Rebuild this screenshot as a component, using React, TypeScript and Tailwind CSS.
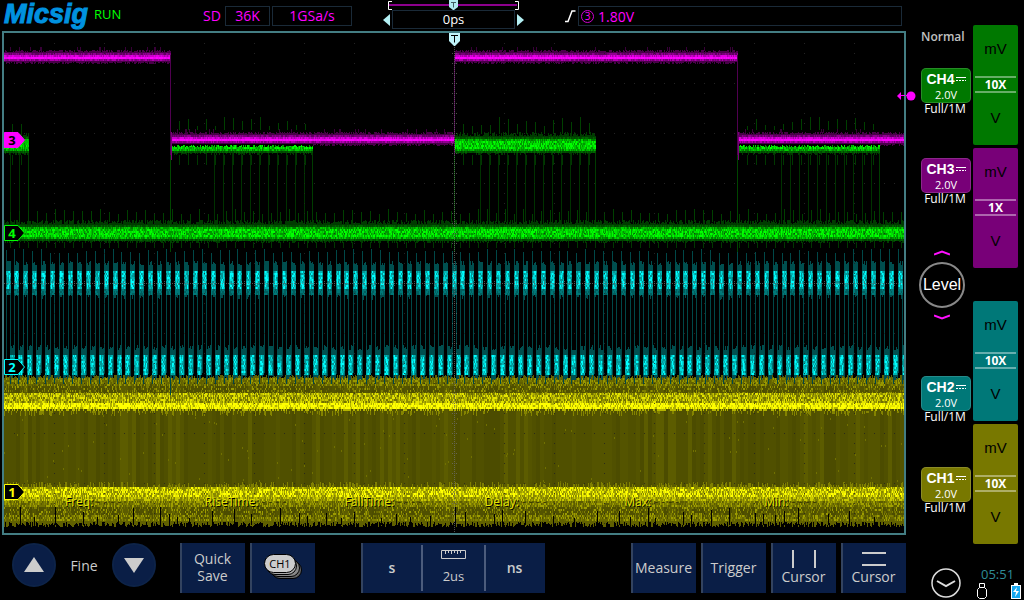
import clsx from "clsx";

type Cells = Record<string, string>;

// Small seeded generator so the traces look the same on every render
const createRandom = (seed: number) => {
  let s = seed;
  return () => {
    s = (s * 1664525 + 1013904223) % 4294967296;
    return s / 4294967296;
  };
};

const cell = (out: Cells, color: string, x: number, y: number, h: number, w = 1) => {
  out[color] = (out[color] || "") + `M${x} ${y}h${w}v${h}h-${w}z`;
};

const pick = (rand: () => number, colors: string[]) => colors[Math.floor(rand() * colors.length)];

// Channel 1: wide yellow band with two bright rails
const buildCh1 = () => {
  const rand = createRandom(11);
  const out: Cells = {};
  for (let x = 4; x < 904; x += 4) {
    cell(out, pick(rand, ["#4c4c00", "#505000", "#505000", "#545400", "#5c5c00"]), x, 380, 140, 4);
  }
  for (let x = 4; x < 904; x++) {
    cell(out, "#606000", x, 375 + Math.floor(rand() * 4), 8);
    for (let y = 378; y < 394; y += 2) {
      if (rand() < (y < 385 ? 0.7 : 0.3)) cell(out, pick(rand, ["#7c7c00", "#989800", "#686800"]), x, y, 2);
    }
    for (let y = 393; y < 403; y += 2) {
      cell(out, pick(rand, ["#707000", "#8c8c00", "#a8a800", "#c4c400", "#e4e400"]), x, y, 2);
    }
    for (let y = 403; y < 409; y += 2) {
      cell(out, pick(rand, ["#ffff00", "#e8e800", "#ffff00", "#b0b000"]), x, y, 2);
    }
    if (rand() < 0.5) cell(out, "#b4b400", x, 409, 2);
    if (rand() < 0.3) cell(out, "#848400", x, 411, 2 + Math.floor(rand() * 4));
    if (rand() < 0.12) cell(out, "#707000", x, 414 + Math.floor(rand() * 68), 2);
    if (rand() < 0.35) cell(out, "#808000", x, 482 + Math.floor(rand() * 4), 5);
    for (let y = 487; y < 497; y += 2) {
      cell(out, pick(rand, ["#ffff00", "#e8e800", "#c0c000", "#a0a000", "#888800"]), x, y, 2);
    }
    for (let y = 497; y < 507; y += 2) {
      cell(out, pick(rand, y < 501 ? ["#c8c800", "#a0a000", "#808000"] : ["#a0a000", "#808000", "#707000", "#5c5c00"]), x, y, 2);
    }
    for (let y = 507; y < 521; y += 2) {
      if (rand() < (y > 514 ? 0.7 : 0.35)) cell(out, pick(rand, ["#7c7c00", "#9c9c00", "#686800"]), x, y, 2);
    }
    cell(out, "#606000", x, 519, 3 + Math.floor(rand() * 6));
  }
  let x = 20;
  while (x < 900) {
    const h = 7 + Math.floor(rand() * 12);
    cell(out, "#000000", x, 525 - h, h);
    x += 7 + Math.floor(rand() * 24);
  }
  return out;
};

// Channel 2: cyan clock, high and low rails alternate every half period
const buildCh2 = () => {
  const rand = createRandom(22);
  const out: Cells = {};
  for (let i = 0; i < 102; i++) {
    const left = Math.round(5.5 + i * 8.92);
    if (left > 899) break;
    cell(out, "#004848", left, 249 + Math.floor(rand() * 5), 124);
    cell(out, "#004848", left + 4, 268, 116);
    for (let dx = 0; dx < 5; dx++) {
      const hi = left + dx;
      const lo = Math.min(left + 4 + dx, 903);
      const edge = dx === 0 || dx === 4;
      const colors = edge ? ["#00b4b4", "#009090", "#007474"] : ["#00ffff", "#00dcdc", "#00b4b4", "#009898"];
      cell(out, "#004f4f", hi, 261 + Math.floor(rand() * 5), 30 + Math.floor(rand() * 6));
      cell(out, "#004f4f", lo, 345 + Math.floor(rand() * 6), 30);
      for (let y = 271; y < 289; y += 2) cell(out, pick(rand, colors), hi, y, 2);
      for (let y = 289; y < 294; y += 2) cell(out, pick(rand, ["#007878", "#005f5f"]), hi, y, 2);
      for (let y = 355; y < 375; y += 2) cell(out, pick(rand, colors), lo, y, 2);
    }
  }
  cell(out, "#004848", 170, 370, 25);
  return out;
};

const ch4Bursts = [
  { from: 4, to: 29, edges: 10, covered: false },
  { from: 171, to: 313, edges: 214, covered: true },
  { from: 455, to: 596, edges: 480, covered: false },
  { from: 739, to: 880, edges: 781, covered: true },
];

// Channel 4: green low rail plus data bursts
const buildCh4 = () => {
  const rand = createRandom(44);
  const out: Cells = {};
  const rail = (x: number, mid: number) => {
    const top = mid - 8 - Math.floor(rand() * 5);
    cell(out, "#003c00", x, top, mid + 7 + Math.floor(rand() * 5) - top);
    for (let y = mid - 7; y < mid + 8; y += 2) {
      if (y < mid - 5 || y > mid + 5) {
        cell(out, pick(rand, ["#006400", "#005000", "#004600"]), x, y, 2);
      } else if (y < mid - 3 || y > mid + 3) {
        cell(out, pick(rand, ["#00d000", "#00b000", "#009000", "#007800"]), x, y, 2);
      } else {
        cell(out, pick(rand, ["#00ff00", "#00e000", "#00c000", "#009600"]), x, y, 2);
      }
    }
  };
  ch4Bursts.forEach(({ from, to, edges }) => {
    for (let x = edges; x < to; x += 9) cell(out, "#003200", x, 140, 85);
    cell(out, "#003c00", to - 1, 140, 85);
    for (let x = from + 8; x < to; x += 9) {
      const h = 8 + Math.floor(rand() * 10);
      cell(out, "#004000", x, 134 - h, h);
      cell(out, "#003800", x, 155, 10);
    }
    for (let x = from; x < to; x++) rail(x, 144);
  });
  [170, 454, 737].forEach((x) => cell(out, "#004600", x, 150, 102));
  for (let x = 10; x < 904; x += 9) {
    const h = 8 + Math.floor(rand() * 6);
    cell(out, "#004000", x, 222 - h, h);
    cell(out, "#003800", x, 242, 6);
  }
  for (let x = 4; x < 904; x++) rail(x, 232);
  // the magenta trace hides the upper half of these bursts
  ch4Bursts.filter((b) => b.covered).forEach(({ from, to }) => {
    for (let x = from; x < to; x++) cell(out, "#000000", x, 130, 15 + Math.floor(rand() * 3));
  });
  return out;
};

// Channel 3: magenta square wave
const buildCh3 = () => {
  const rand = createRandom(33);
  const out: Cells = {};
  for (let x = 4; x < 904; x++) {
    const high = x < 171 || (x >= 455 && x < 738);
    const mid = high ? 57 : 139;
    const covered = ch4Bursts.some((b) => b.covered && x >= b.from && x < b.to);
    const top = mid - 5 - Math.floor(rand() * 3);
    cell(out, "#4a004a", x, top, mid + (covered ? 5 : 5 + Math.floor(rand() * 3)) - top);
    if (rand() < 0.06) cell(out, "#380038", x, mid - 10, 4);
    cell(out, pick(rand, ["#780078", "#600060", "#900090"]), x, mid - 4, 2);
    cell(out, pick(rand, ["#c800c8", "#e000e0", "#a800a8"]), x, mid - 2, 2);
    cell(out, pick(rand, ["#ff00ff", "#ff00ff", "#f000f0"]), x, mid, 2);
    cell(out, pick(rand, ["#900090", "#b000b0", "#780078"]), x, mid + 2, 2);
  }
  [170, 454, 737].forEach((x) => cell(out, "#500050", x, 55, 100));
  [171, 738].forEach((x) => cell(out, "#780078", x, 132, 28));
  return out;
};

const buildGrid = () => {
  let dots = "";
  for (let x = 54; x < 904; x += 50) for (let y = 43; y < 533; y += 10) dots += `M${x} ${y}h1v1h-1z`;
  for (let y = 83; y < 533; y += 50) for (let x = 14; x < 904; x += 10) dots += `M${x} ${y}h1v1h-1z`;
  return dots;
};

const buildAxes = () => {
  let dots = "";
  for (let x = 4; x < 904; x += 2) dots += `M${x} 283h1v1h-1z`;
  for (let y = 45; y < 533; y += 2) dots += `M454 ${y}h1v1h-1z`;
  for (let x = 14; x < 904; x += 10) dots += `M${x} 281h1v1h-1zM${x} 285h1v1h-1z`;
  for (let y = 53; y < 533; y += 10) dots += `M452 ${y}h1v1h-1zM456 ${y}h1v1h-1z`;
  return dots;
};

const traces = [buildCh1(), buildCh2(), buildCh4(), buildCh3()];
const gridDots = buildGrid();
const axisDots = buildAxes();

const markers = [
  { label: "3", y: 140, color: "#ff00ff", filled: true },
  { label: "4", y: 233, color: "#00ff00", filled: false },
  { label: "2", y: 367, color: "#00ffff", filled: false },
  { label: "1", y: 492, color: "#ffff00", filled: false },
];

const measurements = ["Freq:", "RiseTime:", "FallTime:", "Delay:", "Max:", "Min:"];

const Scope = () => (
  <main className="relative ml-[2px] border-2 border-[#437d83]">
    <svg viewBox="4 33 900 500" className="block h-auto w-full" role="img" aria-label="Waveforms">
      <g shapeRendering="crispEdges">
        <path d={gridDots} fill="#303030" />
        {traces.map((trace, i) => (
          <g key={i}>
            {Object.entries(trace).map(([color, d]) => (
              <path key={color} d={d} fill={color} />
            ))}
          </g>
        ))}
        <path d={gridDots} fill="#202020" fillOpacity="0.8" />
        <path d={axisDots} fill="#707070" fillOpacity="0.7" />
      </g>
      <path d="M449 33h11v8l-5 5h-1l-5-5z" fill="#c0f4fa" />
      <path d="M451 35.5h7M454.5 35.5v7" stroke="#000" fill="none" />
      {markers.map((m) => (
        <g key={m.label}>
          <path
            d={`M4.5 ${m.y - 7.5}H18l6.500 7.500L18 ${m.y + 7.5}H4.500z`}
            fill={m.filled ? m.color : "#000"}
            stroke={m.color}
          />
          <text
            x="12"
            y={m.y + 5}
            textAnchor="middle"
            fill={m.filled ? "#000" : m.color}
            fontSize="13"
            fontWeight="bold"
            fontFamily="Open Sans, sans-serif"
          >
            {m.label}
          </text>
        </g>
      ))}
    </svg>
    <div className="absolute inset-x-0 bottom-[23px] grid grid-cols-6 pl-[61px] text-[12px] leading-4 text-[#e4e400] [text-shadow:1px_1px_0_#000]">
      {measurements.map((name) => (
        <div key={name}>
          {name}
          <span className="text-[#3c3c00] [text-shadow:none]"> - - - -</span>
        </div>
      ))}
    </div>
  </main>
);

const Header = () => (
  <header className="flex h-[31px] items-start">
    <div className="w-[94px] pl-[4px] font-['Liberation_Sans',sans-serif] text-[27px] leading-[28px] font-bold text-[#0092e0] italic [-webkit-text-stroke:1px_#0092e0]">
      Micsig
    </div>
    <div className="mt-[5px] w-[109px] text-[13px] leading-[18px] text-[#00ff00]">RUN</div>
    <div className="mt-[7px] w-[22px] text-[14px] leading-[18px] text-[#ff00ff]">SD</div>
    <div className="mt-[6px] h-[20px] w-[45px] border border-[#1a2a38] text-center text-[14px] leading-[17px] text-[#ff00ff]">36K</div>
    <div className="mt-[6px] ml-[2px] h-[20px] w-[80px] border border-[#1a2a38] text-center text-[14px] leading-[17px] text-[#ff00ff]">1GSa/s</div>
    <div className="ml-[30px] w-[142px]">
      <svg viewBox="0 0 142 10" className="block h-[10px] w-full" fill="none">
        <path d="M7 5h128" stroke="#8c008c" strokeWidth="2" />
        <path d="M10 1.500H6.500v8H10M133 1.500h3.500v8H133" stroke="#fff" />
        <path d="M67 0h9v7l-4 3h-1l-4-3z" fill="#b0e8ee" />
        <path d="M69 2.500h5M71.500 2.500v5" stroke="#405c60" />
      </svg>
      <div className="flex items-center justify-between">
        <button aria-label="Move left" className="ml-px">
          <svg viewBox="0 0 7 12" className="h-[12px] w-[7px]"><path d="M7 0v12L0 6z" fill="#b4f0f4" /></svg>
        </button>
        <div className="h-[19px] w-[123px] border border-[#1a2a38] text-center text-[13px] leading-[16px] text-white">0ps</div>
        <button aria-label="Move right">
          <svg viewBox="0 0 7 12" className="h-[12px] w-[7px]"><path d="M0 0v12l7-6z" fill="#b4f0f4" /></svg>
        </button>
      </div>
    </div>
    <svg viewBox="0 0 12 14" className="mt-[9px] ml-[40px] h-[14px] w-[12px]" fill="none">
      <path d="M1 12.500h3L8 2h3.500" stroke="#fff" strokeWidth="1.500" />
    </svg>
    <div className="mt-[6px] mr-[4px] ml-[2px] flex h-[20px] flex-1 items-center gap-[4px] border border-[#1a2a38] pl-[2px] text-[14px] leading-[17px] text-[#ff00ff]">
      <span className="flex size-[13px] items-center justify-center rounded-full border border-[#d000d0] text-[10px] leading-none">3</span>
      1.80V
    </div>
  </header>
);

const panelButton =
  "flex h-[50px] w-[65px] flex-col items-center justify-center border-l-2 border-[#33435f] bg-[#0a1e46] pr-[2px] pb-[2px] text-[14px] leading-[17px] font-medium text-[#cccccc]";
const roundButton =
  "flex size-[44px] items-center justify-center rounded-full border-2 border-[#0d2348] bg-[#0a1e46]";

const Footer = () => (
  <footer className="flex items-start pt-[8px] pl-[12px]">
    <button aria-label="Fine up" className={roundButton}>
      <svg viewBox="0 0 20 16" className="h-[16px] w-[20px]"><path d="M10 0l10 15H0z" fill="#ccc" /></svg>
    </button>
    <span className="w-[56px] pt-[13px] text-center text-[14px] leading-[20px] font-medium text-[#cccccc]">Fine</span>
    <button aria-label="Fine down" className={roundButton}>
      <svg viewBox="0 0 20 16" className="h-[16px] w-[20px]"><path d="M0 1h20L10 16z" fill="#ccc" /></svg>
    </button>
    <button className={clsx(panelButton, "ml-[24px]")}>
      Quick
      <br />
      Save
    </button>
    <button className={clsx(panelButton, "ml-[5px]")} aria-label="Channel CH1">
      <svg viewBox="0 0 40 27" className="h-[27px] w-[40px]">
        <g stroke="#000">
          <rect x="8.500" y="7.500" width="30" height="17" rx="8.500" fill="#666" />
          <rect x="6.500" y="5.500" width="30" height="17" rx="8.500" fill="#888" />
          <rect x="3.500" y="3.500" width="30" height="17" rx="8.500" fill="#aaa" />
          <rect x="1.500" y="0.500" width="31" height="18" rx="9" fill="#ccc" />
        </g>
        <text x="17" y="13.500" textAnchor="middle" fontSize="11" fill="#000">CH1</text>
      </svg>
    </button>
    <div className="ml-[46px] flex h-[50px] w-[184px] border-l-2 border-[#33435f] bg-[#0a1e46] text-[14px] text-[#cccccc]">
      <button className="w-[58px] pb-[2px] font-semibold">s</button>
      <div className="my-[2px] flex w-[65px] flex-col items-center border-x-2 border-[#4c5c7c]">
        <svg viewBox="0 0 25 9" className="mt-[5px] h-[9px] w-[25px]" fill="none" stroke="#ccc">
          <path d="M.5.5h24v8H.5zM4.500 1v3M7.500 1v2M10.500 1v3M13.500 1v2M16.500 1v3M19.500 1v2" />
        </svg>
        <span className="mt-[8px] text-[13px] leading-[18px]">2us</span>
      </div>
      <button className="flex-1 pr-[2px] pb-[2px] font-semibold">ns</button>
    </div>
    <div className="ml-auto flex gap-[5px]">
      <button className={panelButton}>Measure</button>
      <button className={panelButton}>Trigger</button>
      <button className={panelButton}>
        <svg viewBox="0 0 24 18" className="h-[18px] w-[24px]" stroke="#ccc" strokeWidth="2"><path d="M1 0v18M23 0v18" /></svg>
        Cursor
      </button>
      <button className={panelButton}>
        <svg viewBox="0 0 24 18" className="h-[18px] w-[24px]" stroke="#ccc" strokeWidth="2"><path d="M0 3h24M0 15h24" /></svg>
        Cursor
      </button>
    </div>
  </footer>
);

const ChannelBadge = ({ name, className, color }: { name: string; className: string; color: string }) => (
  <div className={className}>
    <button className={clsx("flex h-[35px] w-[50px] flex-col items-center justify-end rounded-[5px] border border-white/15 text-white", color)}>
      <span className="flex items-center gap-px font-['Liberation_Sans',sans-serif] text-[14px] leading-[16px] font-bold">
        {name}
        <svg viewBox="0 0 10 4" className="h-[4px] w-[10px]" fill="none" stroke="#fff">
          <path d="M0 .5h10" />
          <path d="M0 3.500h10" strokeDasharray="2 1" />
        </svg>
      </span>
      <span className="text-[11px] leading-[15px]">2.0V</span>
    </button>
    <div className="w-[48px] text-center text-[12px] leading-[12px] whitespace-nowrap text-white">Full/1M</div>
  </div>
);

const VoltControl = ({ name, probe, color, className }: { name: string; probe: string; color: string; className?: string }) => (
  <div className={clsx("flex h-[120px] w-[45px] flex-col rounded-[2px] px-[2px] font-['Liberation_Sans',sans-serif] text-[15px] text-black", color, className)}>
    <button aria-label={`${name} mV`} className="h-[51px] pb-[2px]">mV</button>
    <div className="border-y-2 border-white/40 text-center font-['Open_Sans',sans-serif] text-[12px] leading-[13px] font-bold text-white">{probe}</div>
    <button aria-label={`${name} V`} className="flex-1 pb-[2px]">V</button>
  </div>
);

const Chevron = ({ down = false }: { down?: boolean }) => (
  <svg viewBox="0 0 16 6" className="block h-[6px] w-[16px]" fill="none" stroke="#ff10ff" strokeWidth="2">
    <path d={down ? "M0 1.500l8 3 8-3" : "M0 4.500l8-3 8 3"} />
  </svg>
);

const SidePanel = () => (
  <aside className="relative w-[118px] shrink-0">
    {/* trigger level pointer */}
    <svg viewBox="0 0 19 10" className="absolute top-[91px] left-[-9px] h-[10px] w-[19px]">
      <path d="M0 5l4-4v3h4v1H4v4zM9 4h3v1H9z" fill="#ff00ff" />
      <circle cx="14" cy="5" r="4.500" fill="#ff00ff" />
    </svg>
    <div className="flex">
      <div className="w-[67px] pl-[15px]">
        <div className="mt-[29px] w-[42px] text-center text-[12px] leading-4 font-semibold text-[#c0c0c0]">Normal</div>
        <ChannelBadge name="CH4" className="mt-[23px]" color="bg-[#007800]" />
        <ChannelBadge name="CH3" className="mt-[43px]" color="bg-[#780078]" />
        <div className="mt-[45px] -ml-[2px] flex w-[46px] flex-col items-center gap-[6px]">
          <Chevron />
          <button className="flex size-[46px] items-center justify-center rounded-full border-2 border-[#888888] font-['Liberation_Sans',sans-serif] text-[16px] text-white">
            Level
          </button>
          <Chevron down />
        </div>
        <ChannelBadge name="CH2" className="mt-[56px]" color="bg-[#007878]" />
        <ChannelBadge name="CH1" className="mt-[44px]" color="bg-[#787800]" />
      </div>
      <div className="flex flex-col gap-[3px] pt-[25px]">
        <VoltControl name="CH4" probe="10X" color="bg-[#007800]" />
        <VoltControl name="CH3" probe="1X" color="bg-[#780078]" />
        <VoltControl name="CH2" probe="10X" color="bg-[#007878]" className="mt-[30px]" />
        <VoltControl name="CH1" probe="10X" color="bg-[#787800]" />
      </div>
    </div>
    <div className="flex items-start pl-[25px]">
      <button aria-label="Open menu" className="mt-[24px]">
        <svg viewBox="0 0 30 30" className="block size-[30px]" fill="none" stroke="#ddd" strokeWidth="1.500">
          <circle cx="15" cy="15" r="14" />
          <path d="M6 13l9 5 9-5" strokeWidth="2" />
        </svg>
      </button>
      <div className="mt-[21px] ml-[16px] w-[44px]">
        <div className="pl-[4px] text-[13px] leading-[18px] text-[#2f8c98]">05:51</div>
        <div className="flex justify-between">
          <svg viewBox="0 0 10 16" className="h-[16px] w-[10px]" fill="none" stroke="#fff">
            <path d="M2.500 4.500v-4h5v4M.5 6.500l2-2h5l2 2v7l-2 2h-5l-2-2z" />
          </svg>
          <svg viewBox="0 0 10 16" className="h-[16px] w-[10px]">
            <path d="M3 0h4v2h3v14H0V2h3z" fill="#fff" />
            <path d="M1 3h8v12H1z" fill="#18a8f0" />
            <path d="M6 4L2 9h3l-1 5 4-6H5z" fill="#fff" />
          </svg>
        </div>
      </div>
    </div>
  </aside>
);

const App = () => {
  return (
    <div className="flex min-h-screen bg-black font-['Open_Sans',sans-serif]">
      <div className="min-w-0 flex-1">
        <Header />
        <Scope />
        <Footer />
      </div>
      <SidePanel />
    </div>
  );
};

export default App;
